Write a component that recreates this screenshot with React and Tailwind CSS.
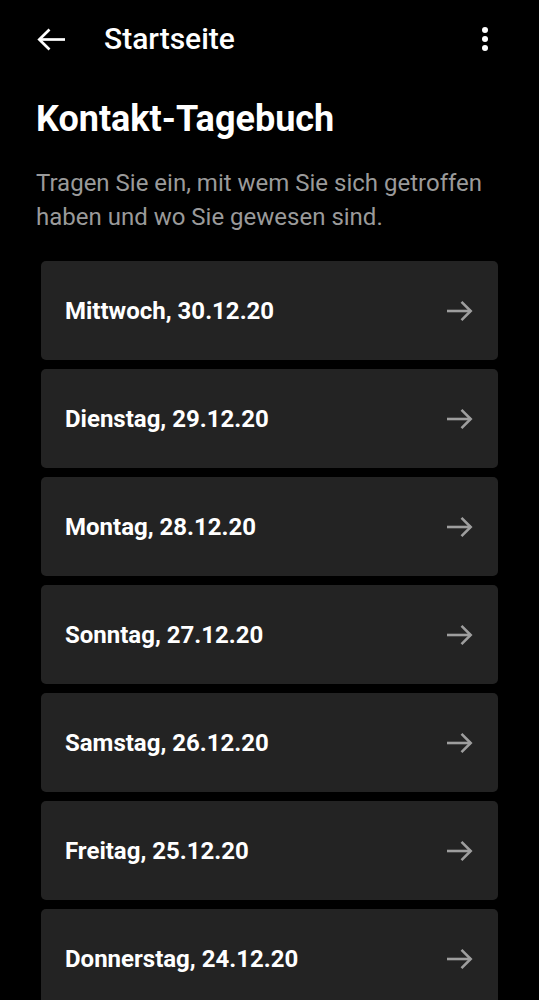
import React from "react";

const days = [
  "Mittwoch, 30.12.20",
  "Dienstag, 29.12.20",
  "Montag, 28.12.20",
  "Sonntag, 27.12.20",
  "Samstag, 26.12.20",
  "Freitag, 25.12.20",
  "Donnerstag, 24.12.20",
];

function ArrowRight({ className }) {
  return (
    <svg viewBox="0 0 26 22" className={className} fill="none" stroke="currentColor" strokeWidth="2.6">
      <path d="M0 11H24" />
      <path d="M14.5 1.8L23.7 11L14.5 20.2" />
    </svg>
  );
}

function ArrowLeft({ className }) {
  return (
    <svg viewBox="0 0 28 23" className={className} fill="none" stroke="currentColor" strokeWidth="2.7">
      <path d="M28 11.5H2.5" />
      <path d="M12.5 1.5L2.3 11.5L12.5 21.5" />
    </svg>
  );
}

export default function App() {
  return (
    <div className="min-h-[1000px] w-full bg-black text-white overflow-hidden" style={{ fontFamily: "Roboto, 'Liberation Sans', sans-serif" }}>
      <div className="flex items-center h-[78px] pl-[37px] pr-[51px]">
        <ArrowLeft className="w-[28px] h-[23px] text-white" />
        <div className="ml-[39px] text-[30px] font-medium flex-1 leading-none">Startseite</div>
        <div className="flex flex-col gap-[3px] items-center">
          <span className="w-[6px] h-[6px] rounded-full bg-white" />
          <span className="w-[6px] h-[6px] rounded-full bg-white" />
          <span className="w-[6px] h-[6px] rounded-full bg-white" />
        </div>
      </div>
      <div className="px-[36px] pt-[17px]">
        <h1 className="text-[36px] font-bold leading-[48px]">Kontakt-Tagebuch</h1>
        <p className="mt-[23px] text-[24px] leading-[34px] text-[#9a9a9a]">
          Tragen Sie ein, mit wem Sie sich getroffen haben und wo Sie gewesen sind.
        </p>
      </div>
      <div className="flex flex-col gap-[9px] px-[41px] mt-[27px]">
        {days.map((d) => (
          <div key={d} className="flex items-center justify-between h-[99px] rounded-[5px] bg-[#232323] pl-[24px] pr-[25px]">
            <span className="text-[24px] font-bold leading-none">{d}</span>
            <ArrowRight className="w-[26px] h-[22px] text-[#9e9e9e]" />
          </div>
        ))}
      </div>
    </div>
  );
}
